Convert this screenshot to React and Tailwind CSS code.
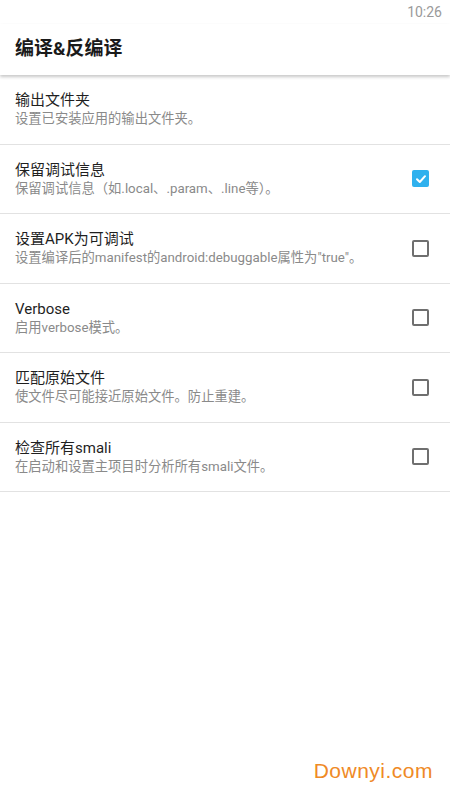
const FONT = { fontFamily: '"Roboto", "Noto Sans CJK SC", sans-serif' }

const OPTIONS = [
  { title: '输出文件夹', sub: '设置已安装应用的输出文件夹。', checkbox: false },
  { title: '保留调试信息', sub: '保留调试信息（如.local、.param、.line等）。', checkbox: true, checked: true },
  { title: '设置APK为可调试', sub: '设置编译后的manifest的android:debuggable属性为"true"。', checkbox: true },
  { title: 'Verbose', sub: '启用verbose模式。', checkbox: true },
  { title: '匹配原始文件', sub: '使文件尽可能接近原始文件。防止重建。', checkbox: true },
  { title: '检查所有smali', sub: '在启动和设置主项目时分析所有smali文件。', checkbox: true },
]

// ─── Checkbox ────────────────────────────────────────────────────────────────
function Check({ checked }) {
  if (checked) {
    return (
      <div className="w-[17px] h-[17px] rounded-[2px] bg-[#2fb1ee] flex items-center justify-center">
        <svg width="12" height="12" viewBox="0 0 12 12" fill="none">
          <path d="M2 6.2 L4.8 9 L10 3.2" stroke="white" strokeWidth="2" strokeLinecap="round" strokeLinejoin="round" />
        </svg>
      </div>
    )
  }
  return <div className="w-[17px] h-[17px] rounded-[2px] border-2 border-[#6f6f6f]" />
}

export default function App() {
  return (
    <div className="relative w-[450px] h-[800px] bg-white overflow-hidden" style={FONT}>
      {/* Status bar */}
      <div className="h-[24px] flex items-center justify-end pr-[8px]">
        <span className="text-[14px] text-[#9a9a9a]">10:26</span>
      </div>

      {/* Toolbar */}
      <div className="h-[51px] flex items-center px-[15px] bg-white shadow-[0_2px_3px_rgba(0,0,0,0.22)] relative z-10">
        <h1 className="text-[19px] font-bold text-[#1a1a1a]">编译&amp;反编译</h1>
      </div>

      {/* Options */}
      <div>
        {OPTIONS.map(o => (
          <div key={o.title} className="h-[69.5px] border-b border-[#e2e2e2] flex items-center pl-[15px] pr-[21px]">
            <div className="flex-1 min-w-0">
              <p className="text-[15px] leading-[20px] text-[#1f1f1f]">{o.title}</p>
              <p className="text-[13.3px] leading-[18px] text-[#8a8a8a]">{o.sub}</p>
            </div>
            {o.checkbox && <Check checked={o.checked} />}
          </div>
        ))}
      </div>

      {/* Watermark */}
      <span
        className="absolute right-[17px] bottom-[14px] text-[21px] text-[#ef8a26]"
        style={{ fontFamily: '"Liberation Sans", sans-serif', letterSpacing: '0.5px' }}
      >
        Downyi.com
      </span>
    </div>
  )
}
